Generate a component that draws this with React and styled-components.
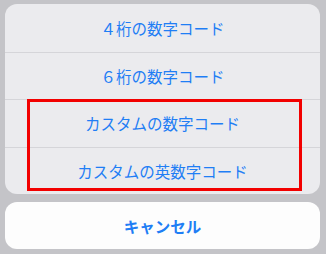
import React from 'react';
import styled, { createGlobalStyle } from 'styled-components';

const GlobalStyle = createGlobalStyle`
    html, body {
        margin: 0;
        padding: 0;
        background: #c4c4c8;
    }
    body {
        font-family: "Noto Sans CJK JP", "Noto Sans", sans-serif;
        -webkit-font-smoothing: antialiased;
    }
`;

const Screen = styled.div`
    width: 326px;
    height: 254px;
    box-sizing: border-box;
    padding: 4px 6px 5px 5px;
    display: flex;
    flex-direction: column;
    gap: 8px;
    background: #c4c4c8;
`;

const Sheet = styled.div`
    display: flex;
    flex-direction: column;
    background: #ebebee;
    border-radius: 12px;
    overflow: hidden;
`;

const Highlight = styled.div`
    position: relative;
    display: flex;
    flex-direction: column;

    &::after {
        content: '';
        position: absolute;
        top: 0;
        bottom: 3px;
        left: 22px;
        right: 18px;
        border: 3px solid #f20000;
        pointer-events: none;
    }
`;

const Option = styled.button`
    all: unset;
    box-sizing: border-box;
    height: 47.5px;
    display: flex;
    align-items: center;
    justify-content: center;
    font-family: inherit;
    font-size: 15.5px;
    font-feature-settings: "fwid" 1;
    font-weight: ${props => (props.$bold ? 700 : 400)};
    color: #1f7ef5;
    border-top: ${props => (props.$first ? 'none' : '1px solid #d5d5d9')};
    cursor: pointer;
`;

const CancelButton = styled(Option)`
    height: 47px;
    font-size: 15.5px;
    background: #fdfdfd;
    border-radius: 12px;
    border-top: none;
`;

const App = () => {
    return (
        <>
            <GlobalStyle />
            <Screen>
                <Sheet>
                    <Option $first>4桁の数字コード</Option>
                    <Option>6桁の数字コード</Option>
                    <Highlight>
                        <Option>カスタムの数字コード</Option>
                        <Option>カスタムの英数字コード</Option>
                    </Highlight>
                </Sheet>
                <CancelButton $bold>キャンセル</CancelButton>
            </Screen>
        </>
    );
};

export default App;
